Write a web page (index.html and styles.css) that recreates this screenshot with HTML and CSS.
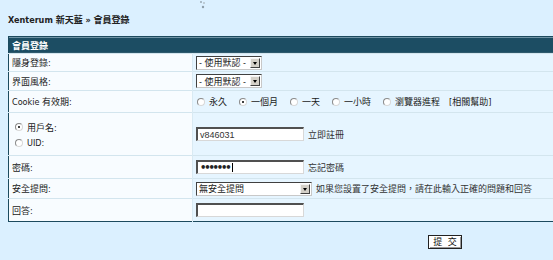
FILE: index.html
```html
<!DOCTYPE html>
<html lang="zh-Hant">
<head>
<meta charset="utf-8">
<title>會員登錄</title>
<link rel="stylesheet" href="styles.css">
</head>
<body>
<div class="page">
  <div class="topmark">
    <svg width="10" height="10" viewBox="0 0 10 10"><circle cx="3" cy="2" r="1" fill="#9aa9b3"/><circle cx="6" cy="3" r="1" fill="#b3c0c8"/><circle cx="5" cy="7" r="1.2" fill="#8e9ea9"/></svg>
  </div>
  <div class="crumb">Xenterum 新天藍 » 會員登錄</div>
  <table class="form">
    <tr class="head"><td colspan="2">會員登錄</td></tr>
    <tr class="r1">
      <td class="lbl">隱身登錄:</td>
      <td class="val"><span class="sel w-def"><span class="sel-text">- 使用默認 -</span><span class="arrow"></span></span></td>
    </tr>
    <tr class="r2">
      <td class="lbl">界面風格:</td>
      <td class="val"><span class="sel w-def"><span class="sel-text">- 使用默認 -</span><span class="arrow"></span></span></td>
    </tr>
    <tr class="r3">
      <td class="lbl">Cookie 有效期:</td>
      <td class="val">
        <div class="radios">
          <span class="opt"><span class="radio"></span>永久</span>
          <span class="opt"><span class="radio on"></span>一個月</span>
          <span class="opt"><span class="radio"></span>一天</span>
          <span class="opt"><span class="radio"></span>一小時</span>
          <span class="opt"><span class="radio"></span>瀏覽器進程</span>
          <span class="help">[相關幫助]</span>
        </div>
      </td>
    </tr>
    <tr class="r4">
      <td class="lbl">
        <div class="idpick">
          <span class="opt"><span class="radio on"></span>用戶名:</span>
          <span class="opt"><span class="radio"></span>UID:</span>
        </div>
      </td>
      <td class="val"><span class="field"><span class="box">v846031</span><span class="note">立即註冊</span></span></td>
    </tr>
    <tr class="r5">
      <td class="lbl">密碼:</td>
      <td class="val"><span class="field"><span class="box pw">•••••••<span class="caret"></span></span><span class="note">忘記密碼</span></span></td>
    </tr>
    <tr class="r6">
      <td class="lbl">安全提問:</td>
      <td class="val"><span class="field"><span class="sel w-q"><span class="sel-text">無安全提問</span><span class="arrow"></span></span><span class="note">如果您設置了安全提問，請在此輸入正確的問題和回答</span></span></td>
    </tr>
    <tr class="r7">
      <td class="lbl">回答:</td>
      <td class="val"><span class="box"></span></td>
    </tr>
  </table>
  <div class="actions"><span class="submit">提 交</span></div>
</div>
</body>
</html>
```

FILE: styles.css
```css
html, body {
  margin: 0;
  padding: 0;
  overflow: hidden;
  background: #dbf0ff;
}
body {
  width: 553px;
  height: 260px;
  font-family: "DejaVu Sans Condensed", "DejaVu Sans", "Noto Sans CJK TC", sans-serif;
  font-size: 9px;
  color: #1a1a1a;
}
.page {
  width: 553px;
  overflow: hidden;
}
.topmark {
  height: 10px;
  padding-left: 198px;
}
.topmark svg {
  display: block;
}
.crumb {
  margin: 4px 0 0 8px;
  height: 12px;
  line-height: 12px;
  font-weight: bold;
  color: #222;
}
.form {
  margin: 10px 0 0 8px;
  width: 640px;
  border-collapse: collapse;
  border: 1px solid #1c4a5e;
}
.form td {
  padding: 0 3px;
  border-top: 1px solid #d3e5ee;
  vertical-align: middle;
}
.head td {
  height: 16px;
  background: #1c4d63;
  color: #fff;
  font-weight: bold;
  border-top: 1px solid #1c4a5e;
  box-shadow: inset 0 1px 0 #6f93a5, inset 0 -1px 0 #2f5a6d;
}
.lbl {
  width: 177px;
  background: #f8fcff;
  border-right: 1px solid #d9eaf3;
}
.val {
  background: #e6f5ff;
}
.r1 td { height: 17px; }
.r2 td { height: 18px; }
.r3 td { height: 21px; }
.r4 td { height: 42px; }
.r5 td { height: 22px; }
.r6 td { height: 19px; }
.r7 td { height: 22px; }

.sel {
  display: inline-flex;
  align-items: center;
  height: 14px;
  box-sizing: border-box;
  background: #fff;
  border-top: 1px solid #404040;
  border-left: 1px solid #404040;
  border-right: 1px solid #c8c8c8;
  border-bottom: 1px solid #c8c8c8;
  vertical-align: middle;
}
.sel-text {
  flex: 1;
  padding-left: 2px;
  white-space: nowrap;
  color: #222;
}
.w-def { width: 66px; }
.w-q { width: 116px; }
.arrow {
  width: 10px;
  height: 10px;
  margin-right: 1px;
  box-sizing: border-box;
  background: #d4d0c8;
  border-top: 1px solid #f4f4f4;
  border-left: 1px solid #f4f4f4;
  border-right: 1px solid #404040;
  border-bottom: 1px solid #404040;
  position: relative;
}
.arrow::after {
  content: "";
  position: absolute;
  left: 2px;
  top: 3px;
  border-left: 2px solid transparent;
  border-right: 2px solid transparent;
  border-top: 3px solid #000;
}

.radios {
  display: flex;
  align-items: center;
  gap: 12px;
  padding-left: 1px;
}
.opt {
  display: inline-flex;
  align-items: center;
  gap: 4px;
  white-space: nowrap;
}
.help {
  margin-left: -3px;
}
.radio {
  width: 8px;
  height: 8px;
  box-sizing: border-box;
  border-radius: 50%;
  background: #fff;
  border: 1px solid #8a8a8a;
  border-right-color: #d8d8d8;
  border-bottom-color: #d8d8d8;
  position: relative;
}
.radio.on::after {
  content: "";
  position: absolute;
  left: 2px;
  top: 2px;
  width: 2px;
  height: 2px;
  border-radius: 50%;
  background: #000;
}
.idpick {
  display: flex;
  flex-direction: column;
  gap: 4px;
  padding-left: 3px;
}

.field {
  display: inline-flex;
  align-items: center;
  gap: 4px;
  white-space: nowrap;
}
.box {
  display: inline-flex;
  align-items: center;
  width: 108px;
  height: 14px;
  box-sizing: border-box;
  padding-left: 2px;
  background: #fff;
  border-top: 2px solid #505050;
  border-left: 2px solid #505050;
  border-right: 1px solid #d8d8d8;
  border-bottom: 1px solid #d8d8d8;
  vertical-align: middle;
  font-family: "Liberation Sans", "Noto Sans CJK TC", sans-serif;
  color: #333;
}
.pw {
  font-family: "DejaVu Sans", sans-serif;
  font-size: 10px;
  font-weight: bold;
  letter-spacing: -2.2px;
  color: #222;
}
.caret {
  width: 1px;
  height: 9px;
  margin-left: 3px;
  background: #000;
}
.note {
  color: #333;
}

.actions {
  padding: 13px 0 0 428px;
}
.submit {
  display: inline-block;
  width: 34px;
  height: 14px;
  box-sizing: border-box;
  line-height: 12px;
  text-align: center;
  background: #fff;
  border: 1px solid #222;
  box-shadow: inset 1px 1px 0 #fff, inset -1px -1px 0 #999;
  word-spacing: 3px;
  color: #111;
}
```
